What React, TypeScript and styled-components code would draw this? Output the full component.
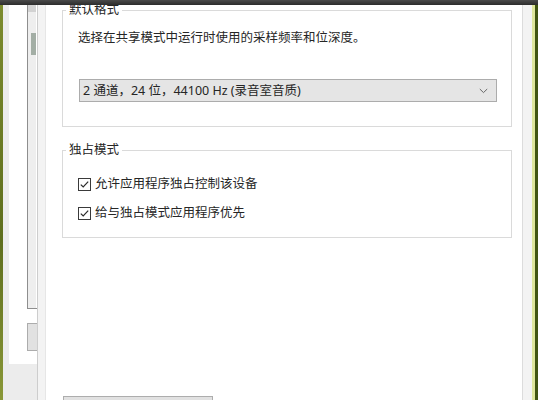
import React from "react";
import styled, { createGlobalStyle } from "styled-components";

const Global = createGlobalStyle`
  html, body { margin: 0; padding: 0; background: #ffffff; }
  * { box-sizing: border-box; }
`;

const Screen = styled.div`
  position: relative;
  width: 538px;
  height: 400px;
  overflow: hidden;
  display: flex;
  flex-direction: row;
  font-family: "Noto Sans", "Noto Sans CJK SC", sans-serif;
  font-size: 12.5px;
  color: #262626;
`;

const TopBar = styled.div`
  position: absolute;
  top: 0;
  left: 0;
  right: 0;
  height: 5px;
  z-index: 2;
  background: linear-gradient(#4a4a4a, #2c2c2c);
`;

const DesktopEdge = styled.div<{ $side: "left" | "right" }>`
  flex: none;
  width: ${(p) => (p.$side === "left" ? "3px" : "6px")};
  background: ${(p) =>
    p.$side === "left"
      ? "linear-gradient(#7d8c2e, #5f6f1e 60%, #8a9838)"
      : "linear-gradient(to right, #dfe79c 0 50%, #415511 50% 100%)"};
`;

const BackWindow = styled.div`
  flex: none;
  width: 34px;
  background: #ececec;
  padding-left: 6px;
`;

const BackPanel = styled.div`
  height: 364px;
  background: #ffffff;
  padding-left: 18px;
  display: flex;
  flex-direction: column;
`;

const Listbox = styled.div`
  height: 309px;
  border-left: 1px solid #8e8e8e;
  border-bottom: 1px solid #8e8e8e;
  display: flex;
`;

const ScrollTrack = styled.div`
  width: 8px;
  background: #eeeeee;
  display: flex;
  flex-direction: column;
`;

const ScrollArrow = styled.div`
  height: 12px;
  background: #d2d2d2;
`;

const ScrollThumb = styled.div`
  margin-top: 21px;
  margin-left: 3px;
  width: 5px;
  height: 22px;
  background: #a3aea5;
`;

const BackButton = styled.div`
  margin-top: 14px;
  height: 28px;
  background: #e1e1e1;
  border: 1px solid #acacac;
  border-right: none;
`;

const Dialog = styled.div`
  flex: 1;
  display: flex;
  border-left: 1px solid #cdcdcd;
  padding-left: 7px;
  padding-right: 9px;
  background: #f3f3f3;
`;

const DialogBody = styled.div`
  flex: 1;
  background: #ffffff;
  border-left: 1px solid #e6e6e6;
  border-right: 1px solid #dcdcdc;
  padding: 3px 10px 0 16px;
  display: flex;
  flex-direction: column;
`;

const Group = styled.fieldset<{ $gap?: number }>`
  margin: ${(p) => p.$gap ?? 0}px 0 0 0;
  padding: 0 14px ${(p) => (p.$gap ? 16 : 24)}px 15px;
  border: 1px solid #dadada;
  min-width: 0;
`;

const Legend = styled.legend`
  margin-left: -12px;
  padding: 0 3px;
  line-height: 14px;
  font-size: 12.5px;
  color: #262626;
`;

const Description = styled.div`
  margin-top: 13px;
  line-height: 16px;
`;

const Select = styled.div`
  margin-top: 33px;
  margin-left: 1px;
  height: 23px;
  display: flex;
  align-items: center;
  justify-content: space-between;
  padding: 0 6px 0 3px;
  background: #e5e5e5;
  border: 1px solid #acacac;
  line-height: 16px;
`;

const Chevron = styled.svg`
  width: 9px;
  height: 6px;
  margin-right: 2px;
`;

const CheckRow = styled.label<{ $first?: boolean }>`
  display: flex;
  align-items: center;
  gap: 4px;
  height: 16px;
  line-height: 16px;
  margin-top: ${(p) => (p.$first ? 19 : 13)}px;
`;

const CheckBox = styled.svg`
  width: 13px;
  height: 13px;
  flex: none;
`;

const Footer = styled.div`
  margin-top: 158px;
  padding-left: 1px;
`;

const FooterButton = styled.div`
  width: 150px;
  height: 23px;
  background: #e1e1e1;
  border: 1px solid #adadad;
`;

function Check() {
  return (
    <CheckBox viewBox="0 0 13 13">
      <rect x="0.5" y="0.5" width="12" height="12" fill="#fff" stroke="#3a3a3a" />
      <polyline
        points="2.8,6.6 5.2,9 10.2,3.6"
        fill="none"
        stroke="#2a2a2a"
        strokeWidth="1.2"
      />
    </CheckBox>
  );
}

export default function App() {
  return (
    <>
      <Global />
      <Screen>
        <TopBar />
        <DesktopEdge $side="left" />
        <BackWindow>
          <BackPanel>
            <Listbox>
              <ScrollTrack>
                <ScrollArrow />
                <ScrollThumb />
              </ScrollTrack>
            </Listbox>
            <BackButton />
          </BackPanel>
        </BackWindow>
        <Dialog>
          <DialogBody>
            <Group>
              <Legend>默认格式</Legend>
              <Description>选择在共享模式中运行时使用的采样频率和位深度。</Description>
              <Select>
                <span>2 通道，24 位，44100 Hz (录音室音质)</span>
                <Chevron viewBox="0 0 9 6">
                  <polyline points="0.8,1 4.5,4.6 8.2,1" fill="none" stroke="#666" strokeWidth="1" />
                </Chevron>
              </Select>
            </Group>
            <Group $gap={16}>
              <Legend>独占模式</Legend>
              <CheckRow $first>
                <Check />
                <span>允许应用程序独占控制该设备</span>
              </CheckRow>
              <CheckRow>
                <Check />
                <span>给与独占模式应用程序优先</span>
              </CheckRow>
            </Group>
            <Footer>
              <FooterButton />
            </Footer>
          </DialogBody>
        </Dialog>
        <DesktopEdge $side="right" />
      </Screen>
    </>
  );
}
